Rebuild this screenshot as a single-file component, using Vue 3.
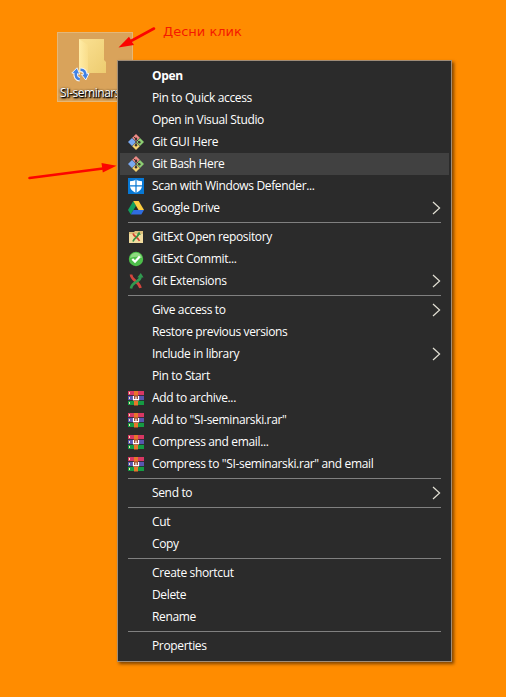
<script setup>
const groups = [
  [
    { label: 'Open', bold: true },
    { label: 'Pin to Quick access' },
    { label: 'Open in Visual Studio' },
    { label: 'Git GUI Here', icon: 'git' },
    { label: 'Git Bash Here', icon: 'git', active: true },
    { label: 'Scan with Windows Defender...', icon: 'shield' },
    { label: 'Google Drive', icon: 'drive', sub: true },
  ],
  [
    { label: 'GitExt Open repository', icon: 'repo' },
    { label: 'GitExt Commit...', icon: 'commit' },
    { label: 'Git Extensions', icon: 'gitext', sub: true },
  ],
  [
    { label: 'Give access to', sub: true },
    { label: 'Restore previous versions' },
    { label: 'Include in library', sub: true },
    { label: 'Pin to Start' },
    { label: 'Add to archive...', icon: 'rar' },
    { label: 'Add to "SI-seminarski.rar"', icon: 'rar' },
    { label: 'Compress and email...', icon: 'rar' },
    { label: 'Compress to "SI-seminarski.rar" and email', icon: 'rar' },
  ],
  [{ label: 'Send to', sub: true }],
  [{ label: 'Cut' }, { label: 'Copy' }],
  [{ label: 'Create shortcut' }, { label: 'Delete' }, { label: 'Rename' }],
  [{ label: 'Properties' }],
]
</script>

<template>
  <main class="desktop">
    <div class="shortcut">
      <svg class="folder" width="40" height="45" viewBox="0 0 40 45">
        <defs>
          <linearGradient id="back" x1="0" x2="1" y1="0" y2="1">
            <stop offset="0" stop-color="#fbe193" />
            <stop offset="1" stop-color="#edcc70" />
          </linearGradient>
          <linearGradient id="flap" x1="0" x2="1" y1="0" y2="0">
            <stop offset="0" stop-color="#ffeca6" />
            <stop offset="1" stop-color="#f9dd8b" />
          </linearGradient>
        </defs>
        <path d="M9 1H34V22L36 24V35H12Z" fill="url(#back)" />
        <path d="M9 1L18 7V36L9 34Z" fill="url(#flap)" />
        <g fill="none" stroke="#f3f3f3" stroke-width="4.600">
          <path d="M9.800 41.300C6.800 41 5.200 38.500 5.800 35.500" />
          <path d="M10.500 31.700C14 31.700 15.500 34 15.200 37" />
        </g>
        <path d="M1.800 35L7 29.800L9.800 36.200ZM11.500 36.500L19 35.500L15.800 42Z" fill="#4285e8" stroke="#f3f3f3" stroke-width="1" />
        <g fill="none" stroke="#4080e2" stroke-width="2.600">
          <path d="M9.800 41.300C6.800 41 5.200 38.500 5.800 34.500" />
          <path d="M10.500 31.700C14 31.700 15.500 34 15.200 38" />
        </g>
      </svg>
      <span class="caption">SI-seminarski</span>
    </div>

    <svg class="arrows" width="160" height="190" viewBox="0 0 160 190">
      <g stroke="#fc0500" stroke-width="2.600" stroke-linecap="round">
        <path d="M154 28.500L131 41" />
        <path d="M29.500 178L103 168.500" />
      </g>
      <path d="M118.500 47.500L129 36.800L134 45Z" fill="#fc0500" />
      <path d="M116.500 165.800L101.500 163L102.800 172.500Z" fill="#fc0500" />
    </svg>
    <span class="note">Десни клик</span>

    <nav class="menu">
      <ul v-for="(group, g) in groups" :key="g" class="group">
        <li v-for="item in group" :key="item.label" class="item" :class="{ active: item.active, bold: item.bold }">
          <span class="icon">
            <svg v-if="item.icon === 'git'" width="16" height="16" viewBox="0 0 16 16">
              <path d="M8 0L11.800 3.800L8 7.600L4.200 3.800Z" fill="#ef8b86" />
              <path d="M4 4L8 8L4 12L0 8Z" fill="#79a8f0" />
              <path d="M12 4L16 8L12 12L8 8Z" fill="#8ccd72" />
              <path d="M8 8.400L11.800 12.200L8 16L4.200 12.200Z" fill="#f5d471" />
              <path d="M5.500 2.500L8 5V11M8 5L11 8" fill="none" stroke="#4b3a38" stroke-width="1" />
              <circle cx="8" cy="4.800" r="1.200" fill="#3b3132" />
              <circle cx="8" cy="11.300" r="1.200" fill="#3b3132" />
              <circle cx="11.300" cy="8.200" r="1.200" fill="#3b3132" />
            </svg>
            <svg v-else-if="item.icon === 'shield'" width="16" height="16" viewBox="0 0 16 16">
              <path d="M0 0H16V16H0Z" fill="#0878d4" />
              <path d="M8 1.300C9.500 2.700 11.500 3.200 14 3.200V7.500C14 11 11.500 13.300 8 15C4.500 13.300 2 11 2 7.500V3.200C4.500 3.200 6.500 2.700 8 1.300Z" fill="#fff" />
              <path d="M8 1V15M2 7.800H14" stroke="#0878d4" stroke-width="1.200" />
            </svg>
            <svg v-else-if="item.icon === 'drive'" width="16" height="16" viewBox="0 0 16 16">
              <path d="M5.300 1L8 5.700L2.800 14.500L0 10Z" fill="#12a05d" />
              <path d="M5.300 1H10.700L16 10H10.500Z" fill="#fdcd40" />
              <path d="M5.500 10H16L13.300 14.500H2.800Z" fill="#2f6de0" />
            </svg>
            <svg v-else-if="item.icon === 'repo'" width="16" height="16" viewBox="0 0 16 16">
              <path d="M1 3H6L7 2H15V14H1Z" fill="#dcc07a" />
              <path d="M1 5H15V14H1Z" fill="#f1dc9f" />
              <path d="M5 4.500C6 8 10 8 11.500 12" fill="none" stroke="#d34431" stroke-width="1.700" />
              <path d="M5 12.500C6 9 10 8 10.800 5" fill="none" stroke="#349345" stroke-width="1.700" />
              <path d="M8.800 5.500L11.200 2.500L12.800 6Z" fill="#349345" />
            </svg>
            <svg v-else-if="item.icon === 'commit'" width="16" height="16" viewBox="0 0 16 16">
              <circle cx="8" cy="8" r="7.200" fill="#4dbe4a" />
              <path d="M2 7C3 0 13 0 14 7C10 5 6 6 2 7Z" fill="#8edb81" />
              <path d="M4.300 8L7 10.700L11.800 5.500" fill="none" stroke="#fff" stroke-width="2.300" />
            </svg>
            <svg v-else-if="item.icon === 'gitext'" width="16" height="16" viewBox="0 0 16 16">
              <path d="M3 1.500C3.500 8 11 8 12.500 15" fill="none" stroke="#d4453d" stroke-width="2.600" />
              <path d="M3 15.500C4 8.500 12 9 12.500 4" fill="none" stroke="#319a50" stroke-width="2.600" />
              <path d="M9.300 4.500L12.800 0L15.500 4.500Z" fill="#319a50" />
            </svg>
            <svg v-else-if="item.icon === 'rar'" width="16" height="16" viewBox="0 0 16 16">
              <path d="M0 1H16V5.500H0Z" fill="#d83763" />
              <path d="M0 5.500H16V10.500H0Z" fill="#5955b0" />
              <path d="M0 10.500H16V15H0Z" fill="#159b43" />
              <path d="M0 5.500H16M0 10.500H16" stroke="#222" stroke-width=".9" opacity=".75" />
              <path d="M1.500 2V4M1.500 7V9M1.500 12V14" stroke="#f5e5b5" />
              <path d="M6 1H10V15.500H6Z" fill="#e8762b" />
              <path d="M5 5.500H11V11H5Z" fill="#93402a" />
              <path d="M5.500 6V9.700H10.500V6M8 6.500V9.500" fill="none" stroke="#fff" stroke-width="1.200" />
            </svg>
          </span>
          <span class="label">{{ item.label }}</span>
          <svg v-if="item.sub" class="chevron" width="9" height="14" viewBox="0 0 9 14">
            <path d="M1 1L7.600 7L1 13" fill="none" stroke="#e2e0d4" stroke-width="1.200" />
          </svg>
        </li>
      </ul>
    </nav>
  </main>
</template>

<style>
body { margin: 0; }
</style>

<style scoped>
.desktop {
  position: relative;
  width: 506px;
  height: 697px;
  overflow: hidden;
  background: #ff8c00;
  font-family: "Open Sans", "Noto Sans", sans-serif;
}
.shortcut {
  position: absolute;
  left: 57px;
  top: 32px;
  box-sizing: border-box;
  width: 76px;
  height: 70px;
  padding: 5px 0 0 2px;
  border: 1px solid #e4b778;
  background: #d9a35b;
}
.folder {
  display: block;
  margin-left: 10px;
}
.caption {
  display: block;
  margin-top: 1px;
  color: #fff;
  font-size: 12px;
  line-height: 17px;
  letter-spacing: -0.45px;
  white-space: nowrap;
  text-shadow: 1px 1px 1px #000, 1px 1px 2px #000, 0 1px 3px #000;
}
.arrows {
  position: absolute;
  left: 0;
  top: 0;
}
.note {
  position: absolute;
  left: 163px;
  top: 23px;
  color: #f51a00;
  font: 13px/17px "DejaVu Sans", sans-serif;
  white-space: nowrap;
}
.menu {
  position: absolute;
  left: 117px;
  top: 60px;
  box-sizing: border-box;
  width: 335px;
  height: 602px;
  padding: 4px 2px 3px;
  border: 1px solid #a08d78;
  background: #2b2b2b;
  box-shadow: 2px 2px 3px rgba(60, 30, 0, 0.65);
}
.group {
  margin: 0;
  padding: 0;
  list-style: none;
}
.group + .group::before {
  content: "";
  display: block;
  height: 1px;
  margin: 3px 8px 3px 8px;
  background: #808080;
}
.group + .group::before {
  margin-right: 8px;
}
.item {
  display: flex;
  align-items: center;
  height: 22px;
  padding: 0 8px;
  color: #fff;
  font-size: 12px;
  line-height: 22px;
  letter-spacing: -0.35px;
}
.active { background: #414141; }
.bold { font-weight: 700; }
.icon {
  display: flex;
  width: 16px;
  height: 16px;
  margin-right: 8px;
}
.label {
  flex: 1;
  white-space: nowrap;
}
</style>
